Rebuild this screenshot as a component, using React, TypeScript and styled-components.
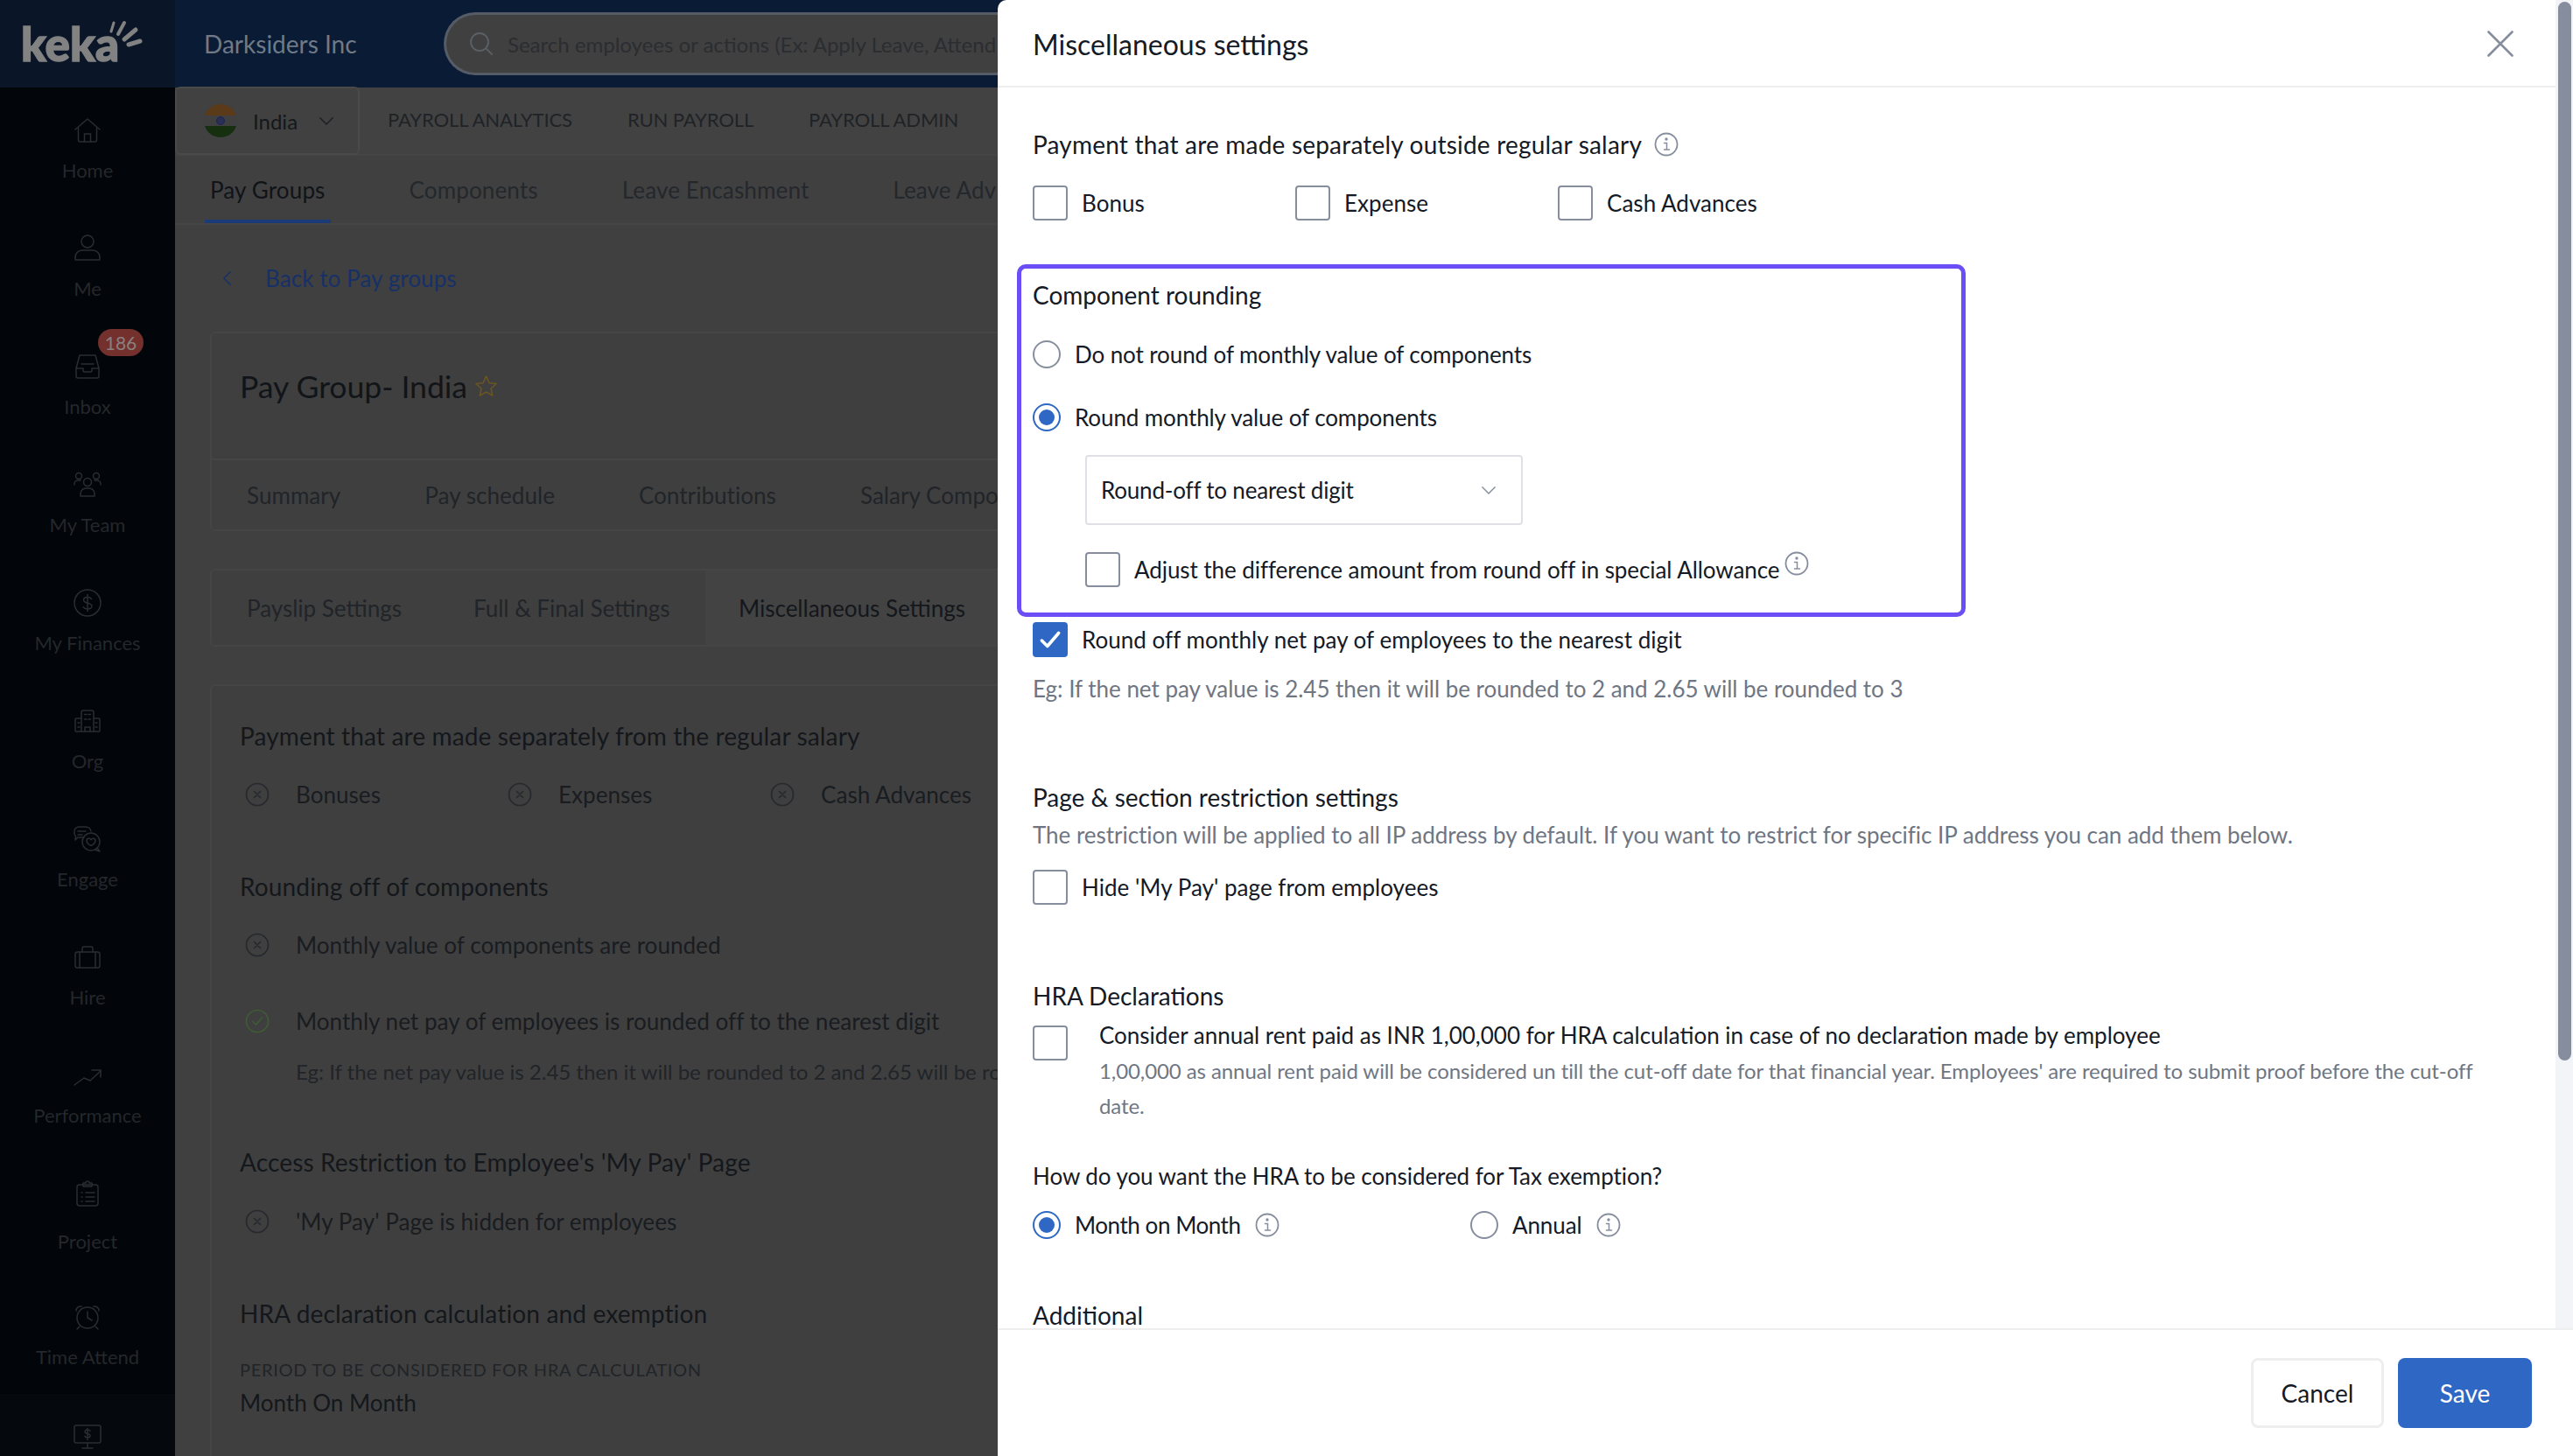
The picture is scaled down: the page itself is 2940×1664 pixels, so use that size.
import React from "react";
import styled, { createGlobalStyle } from "styled-components";

const FONT = `"Lato", "Open Sans", "Liberation Sans", sans-serif`;

const Global = createGlobalStyle`
  html, body { margin: 0; padding: 0; background: #404040; }
  body { font-family: ${FONT}; }
  * { box-sizing: border-box; }
`;

const Page = styled.div`
  width: 2940px; height: 1664px; position: relative; overflow: hidden;
  display: grid; grid-template-columns: 200px 950px 1fr; background: #404040;
`;

/* ---------- sidebar ---------- */
const Sidebar = styled.aside`
  display: flex; flex-direction: column; background: #020509; height: 1664px; overflow: hidden;
`;
const LogoCell = styled.div`
  height: 100px; flex: none; background: #0a1628; position: relative; padding: 20px 0 0 24px;
  display: flex; align-items: flex-start;
`;
const LogoWord = styled.span`
  font-family: "Lato", sans-serif; font-weight: 900; font-size: 53px; line-height: 60px;
  -webkit-text-stroke: 1.5px #828282; color: #828282;
`;
const LogoRays = styled.svg`
  position: absolute; left: 122px; top: 22px; width: 42px; height: 36px;
`;
const NavItem = styled.div<{ $h?: number; $active?: boolean }>`
  height: ${p => p.$h ?? 135}px; flex: none; position: relative;
  display: flex; flex-direction: column; align-items: center; padding-top: 31px;
  background: ${p => (p.$active ? "#05090e" : "transparent")};
`;
const NavIconBox = styled.div`
  height: 36px; display: flex; align-items: center; justify-content: center; color: #2a2e33;
`;
const NavLabel = styled.div<{ $gap?: number }>`
  margin-top: ${p => p.$gap ?? 15}px; font-size: 22px; line-height: 26px; color: #24272b; white-space: nowrap;
`;
const Badge = styled.div`
  position: absolute; left: 112px; top: 6px; width: 52px; height: 31px; border-radius: 16px;
  background: #74302d; color: #8a8080; font-size: 21px; line-height: 31px; text-align: center;
`;

/* ---------- main (behind drawer) ---------- */
const Main = styled.main`
  display: flex; flex-direction: column; min-width: 0; height: 1664px; overflow: hidden;
`;
const TopBar = styled.header`
  height: 100px; flex: none; background: #0a1b35; display: flex; align-items: center; padding-left: 33px;
`;
const Company = styled.div`
  width: 274px; flex: none; font-size: 28px; color: #6f7a88; white-space: nowrap;
`;
const SearchBox = styled.div`
  width: 643px; height: 72px; flex: none; border-radius: 36px 0 0 36px; background: #404040;
  border: 3px solid #565c66; border-right: 0; display: flex; align-items: center; padding-left: 26px;
  gap: 16px; color: #5b5f66; overflow: hidden;
`;
const SearchText = styled.span`
  font-size: 24px; color: #2b2d30; white-space: nowrap;
`;
const SubNav = styled.nav`
  height: 78px; flex: none; background: #424242; display: flex; align-items: center; border-bottom: 2px solid #454545;
`;
const CountryPicker = styled.div`
  width: 211px; height: 78px; flex: none; border: 2px solid #4a4a4a; border-radius: 6px; background: #414141;
  display: flex; align-items: center; padding-left: 31px; color: #1e2024;
`;
const Flag = styled.span`
  width: 38px; height: 38px; border-radius: 50%; flex: none; overflow: hidden; display: flex; flex-direction: column;
`;
const FlagBand = styled.span<{ $c: string }>`
  flex: 1; background: ${p => p.$c}; display: flex; align-items: center; justify-content: center;
`;
const FlagWheel = styled.span`
  width: 10px; height: 10px; border-radius: 50%; border: 1.5px solid #1c2550; background: #2a2f55;
`;
const CountryName = styled.span`
  margin-left: 18px; margin-right: 24px; font-size: 24px; color: #15171b;
`;
const SubNavLinks = styled.div`
  display: flex; padding: 0 0 4px 32px; gap: 63px;
`;
const SubNavLink = styled.span`
  font-size: 22px; letter-spacing: -0.1px; color: #1f2226; white-space: nowrap;
`;
const PrimaryTabs = styled.div`
  height: 79px; flex: none; display: flex; align-items: stretch; padding-left: 34px; gap: 84px;
  border-bottom: 2px solid #454545; overflow: hidden;
`;
const PrimaryTab = styled.div<{ $active?: boolean }>`
  flex: none; padding: 0 6px; font-size: 26px; letter-spacing: 0.15px; line-height: 79px; white-space: nowrap;
  color: ${p => (p.$active ? "#101318" : "#24282c")};
  border-bottom: 4px solid ${p => (p.$active ? "#1b3a78" : "transparent")};
`;
const Content = styled.div`
  padding: 0 0 0 40px; display: flex; flex-direction: column;
`;
const BackRow = styled.div`
  height: 122px; display: flex; align-items: center; padding-left: 14px; gap: 38px; color: #173068;
`;
const BackText = styled.span`
  font-size: 26px; letter-spacing: 0.08px; color: #173068;
`;
const Card = styled.section`
  width: 1200px; background: #3f3f3f; border: 2px solid #454545; border-radius: 6px;
`;
const CardHead = styled.div`
  height: 145px; padding: 0 0 22px 32px; display: flex; align-items: center; gap: 8px; border-bottom: 2px solid #454545;
`;
const CardTitle = styled.h1`
  margin: 0; font-weight: 400; font-size: 35.5px; color: #111418;
`;
const CardTabs = styled.div`
  height: 79px; display: flex; align-items: center; padding-left: 40px; gap: 96px;
`;
const TabsCard = styled.div`
  margin-top: 43px; width: 1200px; height: 89px; border: 2px solid #454545; border-radius: 6px;
  display: flex; align-items: stretch; padding-left: 40px; background: #3f3f3f;
`;
const PlainTab = styled.span`
  font-size: 26px; letter-spacing: 0.05px; white-space: nowrap; color: #212428;
`;
const SettingTab = styled.div<{ $active?: boolean; $w: number }>`
  width: ${p => p.$w}px; flex: none; font-size: 26px; white-space: nowrap; display: flex; align-items: center;
  color: ${p => (p.$active ? "#14171b" : "#212428")};
  background: ${p => (p.$active ? "#434343" : "transparent")};
  padding-left: ${p => (p.$active ? 38 : 0)}px;
`;
const DetailCard = styled.section`
  margin-top: 43px; width: 1200px; border: 2px solid #454545; border-radius: 6px; background: #3f3f3f;
  padding: 0 0 0 32px; height: 900px;
`;
const BgHeading = styled.h3<{ $top: number }>`
  margin: ${p => p.$top}px 0 0; height: 40px; line-height: 40px; font-weight: 400; font-size: 28px; letter-spacing: 0.15px;
  color: #14171b; white-space: nowrap;
`;
const BgRow = styled.div<{ $top: number }>`
  margin-top: ${p => p.$top}px; height: 40px; display: flex; align-items: center; padding-left: 6px;
`;
const BgItem = styled.div`
  width: 300px; flex: none; display: flex; align-items: center; gap: 30px; font-size: 26px; letter-spacing: 0.05px; color: #191c20; white-space: nowrap;
`;
const BgNote = styled.div<{ $top: number }>`
  margin: ${p => p.$top}px 0 0 64px; height: 40px; line-height: 40px; font-size: 24px; color: #212428; white-space: nowrap;
`;
const Caption = styled.div`
  margin-top: 29px; height: 30px; line-height: 30px; font-size: 20px; letter-spacing: 0.7px; color: #212428; white-space: nowrap;
`;
const BgValue = styled.div`
  margin-top: 3px; height: 40px; line-height: 40px; font-size: 26px; color: #14171b;
`;

/* ---------- drawer ---------- */
const Drawer = styled.aside`
  position: absolute; left: 1140px; top: 0; width: 1800px; height: 1664px; background: #fff;
  border-radius: 10px 0 0 0; display: flex; flex-direction: column; overflow: hidden; color: #141a26;
`;
const Upper = styled.div`
  height: 1518px; flex: none; display: flex;
`;
const ScrollCol = styled.div`
  flex: 1; min-width: 0; display: flex; flex-direction: column;
`;
const DrawerHead = styled.header`
  height: 100px; flex: none; border-bottom: 2px solid #eeeeee; display: flex; align-items: center;
  justify-content: space-between; padding: 2px 48px 0 40px;
`;
const DrawerTitle = styled.h2`
  margin: 0; font-weight: 400; font-size: 32px; color: #141a26;
`;
const DrawerBody = styled.div`
  flex: 1; overflow: hidden; padding: 45px 0 0 40px;
`;
const Track = styled.div`
  width: 20px; flex: none; background: #f3f4f8; padding: 2px 2px 0 3px;
`;
const Thumb = styled.div`
  height: 1210px; border-radius: 8px; background: #868e9e;
`;
const Heading = styled.div<{ $top?: number; $tight?: boolean }>`
  margin-top: ${p => p.$top ?? 0}px; height: 40px; display: flex; align-items: center; gap: 14px;
  font-size: ${p => (p.$tight ? 26 : 28)}px; letter-spacing: ${p => (p.$tight ? -0.06 : 0.2)}px; color: #141a26; white-space: nowrap;
`;
const Section = styled.div<{ $top?: number }>`
  margin-top: ${p => p.$top ?? 0}px; height: 40px; display: flex; align-items: center;
  font-size: 28px; color: #141a26; white-space: nowrap;
`;
const CheckRow = styled.div<{ $top?: number }>`
  margin-top: ${p => p.$top ?? 0}px; height: 40px; display: flex; align-items: center;
`;
const CheckCell = styled.label<{ $w?: number }>`
  width: ${p => (p.$w ? `${p.$w}px` : "auto")}; flex: none; display: flex; align-items: center; gap: 16px;
  font-size: 26px; letter-spacing: 0.03px; white-space: nowrap; color: #141a26;
`;
const Box = styled.span<{ $checked?: boolean }>`
  width: 40px; height: 40px; flex: none; border-radius: 4px; display: flex; align-items: center; justify-content: center;
  border: 2px solid ${p => (p.$checked ? "#2f68c4" : "#868e9e")};
  background: ${p => (p.$checked ? "#2f68c4" : "#fff")};
`;
const Highlight = styled.section`
  margin: 50px 0 0 -18px; width: 1084px; height: 403px; border: 5px solid #6c4ef6; border-radius: 10px; padding: 10px 0 0 13px;
`;
const RadioRow = styled.div<{ $top: number }>`
  margin-top: ${p => p.$top}px; height: 40px; display: flex; align-items: center;
`;
const RadioCell = styled.label<{ $w?: number; $ls?: number }>`
  width: ${p => (p.$w ? `${p.$w}px` : "auto")}; flex: none; display: flex; align-items: center; gap: 16px;
  font-size: 26px; letter-spacing: ${p => p.$ls ?? -0.1}px; white-space: nowrap; color: #141a26;
`;
const RadioMark = styled.span<{ $on?: boolean }>`
  width: 32px; height: 32px; flex: none; border-radius: 50%; display: flex; align-items: center; justify-content: center;
  border: 2.5px solid ${p => (p.$on ? "#2f68c4" : "#868e9e")};
  &::after { content: ""; width: 18px; height: 18px; border-radius: 50%; background: ${p => (p.$on ? "#2f68c4" : "transparent")}; }
`;
const SelectBox = styled.div`
  margin: 23px 0 0 60px; width: 500px; height: 80px; border: 2px solid #dfe0e6; border-radius: 4px;
  display: flex; align-items: center; justify-content: space-between; padding: 0 28px 0 16px;
  font-size: 26px; letter-spacing: -0.2px; color: #141a26;
`;
const AdjustRow = styled.div`
  margin: 31px 0 0 60px; height: 40px; display: flex; align-items: center; font-size: 26px; letter-spacing: -0.07px; white-space: nowrap; gap: 16px;
`;
const RaisedIcon = styled.span`
  display: inline-flex; margin: -14px 0 0 -11px;
`;
const Muted = styled.div<{ $top?: number }>`
  margin-top: ${p => p.$top ?? 0}px; height: 40px; line-height: 40px; font-size: 26px; letter-spacing: -0.03px; color: #6f7683; white-space: nowrap;
`;
const ConsiderRow = styled.div`
  margin-top: 5px; display: grid; grid-template-columns: 76px 1fr;
`;
const ConsiderBox = styled.div`
  padding-top: 9px;
`;
const ConsiderMain = styled.div`
  height: 41px; line-height: 40px; font-size: 26px; white-space: nowrap; color: #141a26;
`;
const ConsiderSub = styled.div`
  width: 1590px; line-height: 40px; font-size: 24px; letter-spacing: -0.09px; color: #6f7683;
`;
const Footer = styled.footer`
  flex: 1; border-top: 2px solid #eeeeee; display: flex; justify-content: flex-end; align-items: flex-start;
  padding: 32px 47px 0 0; gap: 16px;
`;
const Button = styled.button<{ $primary?: boolean }>`
  width: ${p => (p.$primary ? 153 : 152)}px; height: 80px; border-radius: 8px; font-family: ${FONT}; font-size: 28px;
  border: ${p => (p.$primary ? "none" : "3px solid #eeeeee")};
  background: ${p => (p.$primary ? "#2f68c4" : "#fff")};
  color: ${p => (p.$primary ? "#fff" : "#141a26")};
`;

/* ---------- icons ---------- */
const Stroke = (props: React.SVGProps<SVGSVGElement>) => (
  <svg viewBox="0 0 32 32" width={32} height={32} fill="none" stroke="currentColor" strokeWidth={1.5} strokeLinecap="round" strokeLinejoin="round" {...props} />
);
const icons: Record<string, React.ReactNode> = {
  home: <Stroke><path d="M2 15 16 3l14 12" /><path d="M5.5 13v14a2 2 0 0 0 2 2h17a2 2 0 0 0 2-2V13" /><path d="M12.5 29v-9h7v9" /></Stroke>,
  user: <Stroke><circle cx="16" cy="8" r="7" /><path d="M2 29v-3a8 8 0 0 1 8-8h12a8 8 0 0 1 8 8v3z" /></Stroke>,
  inbox: <Stroke><path d="M7 3h18l4 15v9a2 2 0 0 1-2 2H5a2 2 0 0 1-2-2v-9z" /><path d="M3 18h8v3a1 1 0 0 0 1 1h8a1 1 0 0 0 1-1v-3h8" /><path d="M9 13h14" /></Stroke>,
  team: <Stroke><circle cx="16" cy="13" r="4.5" /><circle cx="6" cy="6" r="3.5" /><circle cx="26" cy="6" r="3.5" /><path d="M8 29v-3a6 6 0 0 1 6-6h4a6 6 0 0 1 6 6v3z" /><path d="M1 16v-1a4 4 0 0 1 4-4h3M31 16v-1a4 4 0 0 0-4-4h-3" /></Stroke>,
  dollar: <Stroke><circle cx="16" cy="16" r="15" /><path d="M20.5 11.5c-1-1.5-2.600-2-4.500-2-2.500 0-4.500 1.300-4.500 3.300 0 4.700 9.500 2 9.500 6.800 0 2-2 3.400-5 3.400-2.200 0-4-.8-5-2.300" /><path d="M16 6.500v19" /></Stroke>,
  org: <Stroke><path d="M9 28V6a2 2 0 0 1 2-2h10a2 2 0 0 1 2 2v22" /><path d="M9 13H3a1 1 0 0 0-1 1v13a1 1 0 0 0 1 1h26a1 1 0 0 0 1-1V14a1 1 0 0 0-1-1h-6" /><path d="M12.500 8.500h2.500M17 8.500h2.500M12.500 14h2.500M17 14h2.500M5 18h2M5 23h2M25 18h2M25 23h2M13 28v-5h6v5" /></Stroke>,
  engage: <Stroke><path d="M12 14H5l-3 3 .5-4A6 6 0 0 1 1 9V7a5 5 0 0 1 5-5h8a6 6 0 0 1 6 5" /><path d="M5 7h9M5 11h5" /><circle cx="20" cy="19" r="10" /><path d="m27 26 3 4-6-2" /><path d="M20 23.500s-5-2.700-5-5.800c0-3 4-3.200 5-.9 1-2.300 5-2.100 5 .9 0 3.100-5 5.800-5 5.800z" /></Stroke>,
  hire: <Stroke><rect x="2" y="10" width="28" height="18" rx="2.500" /><path d="M10 10V6a2 2 0 0 1 2-2h8a2 2 0 0 1 2 2v4M7 10v18M25 10v18" /></Stroke>,
  perf: <Stroke><path d="M1 27 12 19l7 3L31 11" /><path d="M21 10l10 0v8" /></Stroke>,
  project: <Stroke><rect x="4" y="6" width="24" height="24" rx="3" /><path d="M11 6V4h3a2 2 0 0 1 4 0h3v4H11zM9 15h1M14 15h10M9 20h1M14 20h10M9 25h1M14 25h10" /></Stroke>,
  time: <Stroke><circle cx="16" cy="17" r="12" /><path d="M16 10v7l5 3M3 9a5 5 0 0 1 6-5M29 9a5 5 0 0 0-6-5M7 27l-3 3M25 27l3 3" /></Stroke>,
  payroll: <Stroke><rect x="1" y="3" width="30" height="20" rx="2" /><path d="M10 29h12M16 23v6" /><path d="M19 9.500c-.6-1-1.700-1.400-3-1.400-1.700 0-3 .8-3 2.200 0 3 6 1.300 6 4.400 0 1.300-1.300 2.200-3.100 2.200-1.400 0-2.500-.5-3.100-1.500M16 6.500v13" /></Stroke>,
};

const Info = ({ size = 28 }: { size?: number }) => (
  <svg viewBox="0 0 28 28" width={size} height={size} fill="none" stroke="#868e9e" strokeWidth={1.8} strokeLinecap="round" style={{ flex: "none" }}>
    <circle cx="14" cy="14" r="12.500" />
    <path d="M11.500 12.500H14.500V20M11.500 20h6" strokeWidth={1.5} />
    <circle cx="14" cy="8" r=".8" fill="#868e9e" />
  </svg>
);
const Chevron = ({ size = 20, color = "#6f7683", sw = 1.8 }: { size?: number; color?: string; sw?: number }) => (
  <svg viewBox="0 0 20 12" width={size} height={size * 0.6} fill="none" stroke={color} strokeWidth={sw} strokeLinecap="round" strokeLinejoin="round">
    <path d="m2 2 8 8 8-8" />
  </svg>
);
const Tick = () => (
  <svg viewBox="0 0 28 28" width={30} height={30} fill="none" stroke="#fff" strokeWidth={3.4} strokeLinecap="round" strokeLinejoin="round">
    <path d="M5 15l6 6L23 7" />
  </svg>
);
const StatusIcon = ({ ok }: { ok?: boolean }) => (
  <svg viewBox="0 0 28 28" width={28} height={28} fill="none" stroke={ok ? "#3f5a35" : "#26292d"} strokeWidth={1.7} strokeLinecap="round" style={{ flex: "none" }}>
    <circle cx="14" cy="14" r="12.500" />
    {ok ? <path d="m9 14.500 3.500 3.500 7-8" /> : <path d="m10.500 10.500 7 7M17.500 10.500l-7 7" />}
  </svg>
);

const nav = [
  { k: "home", l: "Home" }, { k: "user", l: "Me" }, { k: "inbox", l: "Inbox", badge: "186" },
  { k: "team", l: "My Team" }, { k: "dollar", l: "My Finances" }, { k: "org", l: "Org" },
  { k: "engage", l: "Engage" }, { k: "hire", l: "Hire" }, { k: "perf", l: "Performance" },
  { k: "project", l: "Project", h: 141, gap: 24 }, { k: "time", l: "Time Attend", h: 137 },
];

export default function App() {
  return (
    <Page>
      <Global />
      <Sidebar>
        <LogoCell>
          <LogoWord>keka</LogoWord>
          <LogoRays viewBox="0 0 42 36" fill="none" stroke="#828282" strokeLinecap="round">
            <path d="M8 4 5 14" strokeWidth="3" />
            <path d="M20 4 13 17" strokeWidth="4" />
            <path d="M33 12 20 23" strokeWidth="5" />
            <path d="M38 25 25 29" strokeWidth="5" />
          </LogoRays>
        </LogoCell>
        {nav.map(n => (
          <NavItem key={n.l} $h={n.h}>
            <NavIconBox>{icons[n.k]}</NavIconBox>
            <NavLabel $gap={n.gap}>{n.l}</NavLabel>
            {n.badge && <Badge>{n.badge}</Badge>}
          </NavItem>
        ))}
        <NavItem $active>
          <NavIconBox>{icons.payroll}</NavIconBox>
        </NavItem>
      </Sidebar>

      <Main>
        <TopBar>
          <Company>Darksiders Inc</Company>
          <SearchBox>
            <svg viewBox="0 0 28 28" width={28} height={28} fill="none" stroke="currentColor" strokeWidth={1.8} strokeLinecap="round">
              <circle cx="12" cy="12" r="10" /><path d="m20 20 6 6" />
            </svg>
            <SearchText>Search employees or actions (Ex: Apply Leave, Attend</SearchText>
          </SearchBox>
        </TopBar>
        <SubNav>
          <CountryPicker>
            <Flag>
              <FlagBand $c="#5a3a18" />
              <FlagBand $c="#404040"><FlagWheel /></FlagBand>
              <FlagBand $c="#16300f" />
            </Flag>
            <CountryName>India</CountryName>
            <Chevron size={18} color="#1e2024" />
          </CountryPicker>
          <SubNavLinks>
            <SubNavLink>PAYROLL ANALYTICS</SubNavLink>
            <SubNavLink>RUN PAYROLL</SubNavLink>
            <SubNavLink>PAYROLL ADMIN</SubNavLink>
          </SubNavLinks>
        </SubNav>
        <PrimaryTabs>
          <PrimaryTab $active>Pay Groups</PrimaryTab>
          <PrimaryTab>Components</PrimaryTab>
          <PrimaryTab>Leave Encashment</PrimaryTab>
          <PrimaryTab>Leave Adv</PrimaryTab>
        </PrimaryTabs>
        <Content>
          <BackRow>
            <svg viewBox="0 0 12 20" width={11} height={18} fill="none" stroke="currentColor" strokeWidth={1.8} strokeLinecap="round" strokeLinejoin="round"><path d="M10 2 2 10l8 8" /></svg>
            <BackText>Back to Pay groups</BackText>
          </BackRow>
          <Card>
            <CardHead>
              <CardTitle>Pay Group- India</CardTitle>
              <svg viewBox="0 0 28 28" width={27} height={27} fill="none" stroke="#6b5522" strokeWidth={1.6} strokeLinejoin="round">
                <path d="m14 2 3.600 8 8.400.9-6.300 5.700 1.800 8.400-7.500-4.300L6.500 25l1.800-8.400L2 10.900l8.400-.9z" />
              </svg>
            </CardHead>
            <CardTabs>
              <PlainTab>Summary</PlainTab>
              <PlainTab>Pay schedule</PlainTab>
              <PlainTab>Contributions</PlainTab>
              <PlainTab>Salary Compo</PlainTab>
            </CardTabs>
          </Card>
          <TabsCard>
            <SettingTab $w={259}>Payslip Settings</SettingTab>
            <SettingTab $w={265}>Full &amp; Final Settings</SettingTab>
            <SettingTab $w={400} $active>Miscellaneous Settings</SettingTab>
          </TabsCard>
          <DetailCard>
            <BgHeading $top={37}>Payment that are made separately from the regular salary</BgHeading>
            <BgRow $top={27}>
              <BgItem><StatusIcon />Bonuses</BgItem>
              <BgItem><StatusIcon />Expenses</BgItem>
              <BgItem><StatusIcon />Cash Advances</BgItem>
            </BgRow>
            <BgHeading $top={65}>Rounding off of components</BgHeading>
            <BgRow $top={27}><BgItem><StatusIcon />Monthly value of components are rounded</BgItem></BgRow>
            <BgRow $top={47}><BgItem><StatusIcon ok />Monthly net pay of employees is rounded off to the nearest digit</BgItem></BgRow>
            <BgNote $top={18}>Eg: If the net pay value is 2.45 then it will be rounded to 2 and 2.65 will be rounded to 3</BgNote>
            <BgHeading $top={63}>Access Restriction to Employee's 'My Pay' Page</BgHeading>
            <BgRow $top={28}><BgItem><StatusIcon />'My Pay' Page is hidden for employees</BgItem></BgRow>
            <BgHeading $top={65}>HRA declaration calculation and exemption</BgHeading>
            <Caption>PERIOD TO BE CONSIDERED FOR HRA CALCULATION</Caption>
            <BgValue>Month On Month</BgValue>
          </DetailCard>
        </Content>
      </Main>

      <Drawer>
        <Upper>
          <ScrollCol>
            <DrawerHead>
              <DrawerTitle>Miscellaneous settings</DrawerTitle>
              <svg viewBox="0 0 30 30" width={30} height={30} fill="none" stroke="#868e9e" strokeWidth={2.6} strokeLinecap="round">
                <path d="m1.500 1.500 27 27M28.500 1.500l-27 27" />
              </svg>
            </DrawerHead>
            <DrawerBody>
              <Heading>Payment that are made separately outside regular salary <Info /></Heading>
              <CheckRow $top={27}>
                <CheckCell $w={300}><Box />Bonus</CheckCell>
                <CheckCell $w={300}><Box />Expense</CheckCell>
                <CheckCell><Box />Cash Advances</CheckCell>
              </CheckRow>
              <Highlight>
                <Section>Component rounding</Section>
                <RadioRow $top={28}><RadioCell><RadioMark />Do not round of monthly value of components</RadioCell></RadioRow>
                <RadioRow $top={32}><RadioCell><RadioMark $on />Round monthly value of components</RadioCell></RadioRow>
                <SelectBox>Round-off to nearest digit<Chevron size={18} color="#868e9e" sw={1.6} /></SelectBox>
                <AdjustRow>
                  <Box />Adjust the difference amount from round off in special Allowance
                  <RaisedIcon><Info /></RaisedIcon>
                </AdjustRow>
              </Highlight>
              <CheckRow $top={6}>
                <CheckCell><Box $checked><Tick /></Box>Round off monthly net pay of employees to the nearest digit</CheckCell>
              </CheckRow>
              <Muted $top={16}>Eg: If the net pay value is 2.45 then it will be rounded to 2 and 2.65 will be rounded to 3</Muted>
              <Section $top={84}>Page &amp; section restriction settings</Section>
              <Muted $top={3}>The restriction will be applied to all IP address by default. If you want to restrict for specific IP address you can add them below.</Muted>
              <CheckRow $top={20}><CheckCell><Box />Hide 'My Pay' page from employees</CheckCell></CheckRow>
              <Section $top={84}>HRA Declarations</Section>
              <ConsiderRow>
                <ConsiderBox><Box /></ConsiderBox>
                <div>
                  <ConsiderMain>Consider annual rent paid as INR 1,00,000 for HRA calculation in case of no declaration made by employee</ConsiderMain>
                  <ConsiderSub>1,00,000 as annual rent paid will be considered un till the cut-off date for that financial year. Employees' are required to submit proof before the cut-off date.</ConsiderSub>
                </div>
              </ConsiderRow>
              <Heading $top={40} $tight>How do you want the HRA to be considered for Tax exemption?</Heading>
              <RadioRow $top={16}>
                <RadioCell $w={500} $ls={-0.45}><RadioMark $on />Month on Month <Info /></RadioCell>
                <RadioCell><RadioMark />Annual <Info /></RadioCell>
              </RadioRow>
              <Section $top={63}>Additional</Section>
            </DrawerBody>
          </ScrollCol>
          <Track><Thumb /></Track>
        </Upper>
        <Footer>
          <Button>Cancel</Button>
          <Button $primary>Save</Button>
        </Footer>
      </Drawer>
    </Page>
  );
}
